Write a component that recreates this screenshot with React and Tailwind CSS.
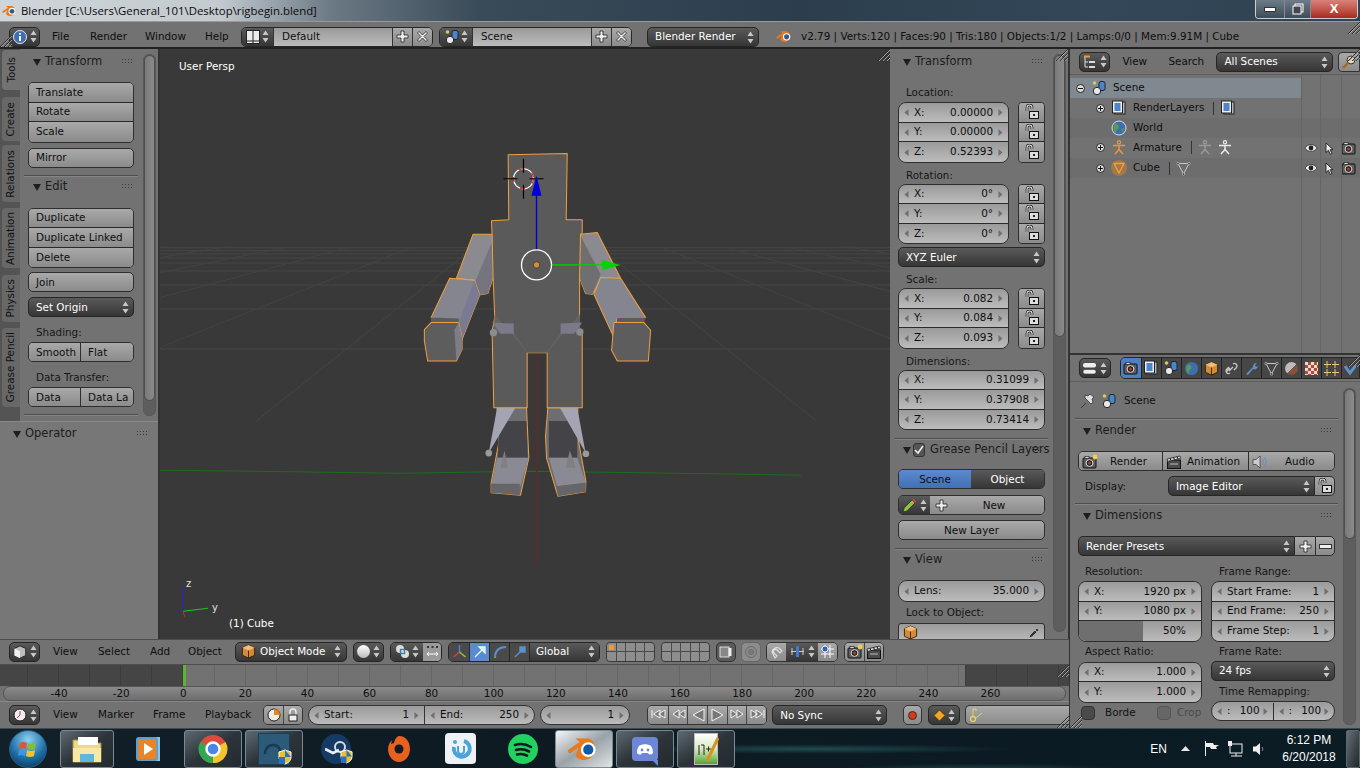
import React from "react";

// Small icon helpers -------------------------------------------------
const Updown = ({ dark = false }) => (
  <svg width="7" height="13" viewBox="0 0 7 13" className="shrink-0">
    <polygon points="3.5,0.5 6.5,5 0.5,5" fill={dark ? "#444" : "#c8c8c8"} />
    <polygon points="3.5,12.5 6.5,8 0.5,8" fill={dark ? "#444" : "#c8c8c8"} />
  </svg>
);

const Tri = ({ right = false }) => (
  <svg width="5" height="7" viewBox="0 0 5 7" className="shrink-0">
    <polygon points={right ? "0.5,0 4.5,3.5 0.5,7" : "4.5,0 0.5,3.5 4.5,7"} fill="#6f6f6f" />
  </svg>
);

const Arrow = () => (
  <svg width="8" height="8" viewBox="0 0 9 9" className="shrink-0">
    <polygon points="0,1 9,1 4.5,9" fill="#1e1e1e" />
  </svg>
);

const Dots = () => (
  <svg width="11" height="6" viewBox="0 0 11 6" className="shrink-0">
    {[0, 1].map((r) =>
      [0, 1, 2, 3].map((c) => <rect key={r + "-" + c} x={c * 3} y={r * 3} width="1" height="1" fill="#3a3a3a" />)
    )}
  </svg>
);

const Lock = () => (
  <svg width="16" height="16" viewBox="0 0 16 16">
    <path d="M3 7V3.5a2.5 2.5 0 0 1 5 0V5" fill="none" stroke="#111" strokeWidth="2.6" />
    <path d="M3 7V3.5a2.5 2.5 0 0 1 5 0V5" fill="none" stroke="#eee" strokeWidth="1.1" />
    <rect x="5.5" y="7.5" width="9" height="7" fill="#ddd" stroke="#111" />
    <rect x="9" y="10" width="2" height="2" fill="#222" />
  </svg>
);

const Plus = () => (
  <svg width="13" height="13" viewBox="0 0 13 13">
    <path d="M5 1h3v4h4v3H8v4H5V8H1V5h4z" fill="#eee" stroke="#222" strokeWidth="0.8" />
  </svg>
);

const Cross = () => (
  <svg width="13" height="13" viewBox="0 0 13 13">
    <path d="M3 1.5 6.5 5 10 1.5 11.5 3 8 6.5 11.5 10 10 11.5 6.5 8 3 11.5 1.5 10 5 6.5 1.5 3z" fill="#eee" stroke="#222" strokeWidth="0.8" />
  </svg>
);

const SceneIcon = () => (
  <svg width="16" height="16" viewBox="0 0 16 16">
    <circle cx="3.5" cy="3" r="1.8" fill="#d8c860" />
    <rect x="8" y="1.5" width="6" height="9" rx="2" fill="#4d86c8" stroke="#14263c" />
    <circle cx="6" cy="11" r="3.7" fill="#e8e8e8" stroke="#222" />
  </svg>
);

const BlenderLogo = ({ size = 16, eye = "#2b5c93", body = "#e8791d" }) => (
  <svg width={size} height={size} viewBox="0 0 24 24">
    <path d="M1 12.5 9 7 6 4.5h9.5a8 8 0 1 1-9.5 12.5L8 11l-5 3.4a1 1 0 0 1-2-1.9z" fill={body} />
    <circle cx="15" cy="12.5" r="5.2" fill="#fff" />
    <circle cx="15" cy="12.5" r="3.6" fill={eye} />
  </svg>
);

const CubeIcon = () => (
  <svg width="15" height="15" viewBox="0 0 16 16">
    <path d="M8 1 14.5 4v8L8 15 1.5 12V4z" fill="#d58a35" stroke="#3b2307" />
    <path d="M1.5 4 8 7l6.5-3L8 1z" fill="#f0bd78" />
    <path d="M8 7v8" stroke="#3b2307" />
  </svg>
);

const Camera = ({ star = false }) => (
  <svg width="16" height="16" viewBox="0 0 16 16">
    <rect x="1" y="4" width="13" height="10" rx="1" fill="#5e5e5e" stroke="#111" />
    <rect x="3" y="2.5" width="4" height="2" fill="#ddd" stroke="#111" strokeWidth="0.6" />
    <circle cx="7.5" cy="9" r="3.4" fill="#222" stroke="#ddd" />
    <circle cx="7.5" cy="9" r="1.5" fill="#b3402e" />
    {star && <circle cx="13" cy="3" r="2.4" fill="#f2cf4a" />}
  </svg>
);

const Clapper = () => (
  <svg width="16" height="16" viewBox="0 0 16 16">
    <rect x="1.5" y="6" width="13" height="8.5" fill="#4b4b4b" stroke="#111" />
    <path d="M1 5 14 2l.6 2.4L1.6 7.4z" fill="#ddd" stroke="#111" strokeWidth="0.7" />
    <path d="M4 4.2 5 6.6M7.5 3.4l1 2.4M11 2.6l1 2.4" stroke="#111" />
    <path d="M4 10h8" stroke="#bbb" />
  </svg>
);

const Eye = () => (
  <svg width="14" height="12" viewBox="0 0 14 12">
    <path d="M1 6c3-4.5 9-4.5 12 0-3 4.5-9 4.5-12 0z" fill="#ececec" stroke="#222" strokeWidth="0.7" />
    <circle cx="7" cy="6" r="2.4" fill="#222" />
  </svg>
);

const Pointer = () => (
  <svg width="9" height="13" viewBox="0 0 9 13">
    <path d="M1 1v9.5l2.4-2.2 2 4 1.6-.8-2-3.8H8z" fill="#eee" stroke="#111" strokeWidth="0.8" />
  </svg>
);

const Man = ({ color = "#e0e0e0", w = 14 }) => (
  <svg width={w} height="15" viewBox="0 0 14 15">
    <circle cx="7" cy="2.2" r="1.6" fill="none" stroke={color} strokeWidth="1.2" />
    <path d="M1 5.5h12M7 5v4.5M7 9.5 3 14M7 9.5l4 4.5" stroke={color} strokeWidth="1.5" fill="none" />
  </svg>
);

const MeshTri = () => (
  <svg width="15" height="15" viewBox="0 0 15 15">
    <path d="M2 2.5h11L7.5 13z" fill="none" stroke="#c8c8c8" />
    <circle cx="2" cy="2.5" r="1.2" fill="#333" stroke="#ddd" strokeWidth="0.6" />
    <circle cx="13" cy="2.5" r="1.2" fill="#333" stroke="#ddd" strokeWidth="0.6" />
    <circle cx="7.5" cy="13" r="1.2" fill="#333" stroke="#ddd" strokeWidth="0.6" />
  </svg>
);

const Expand = ({ minus = false }) => (
  <svg width="9" height="9" viewBox="0 0 9 9" className="shrink-0">
    <circle cx="4.5" cy="4.5" r="4" fill="#ddd" stroke="#222" />
    <path d={minus ? "M2 4.5h5" : "M2 4.5h5M4.5 2v5"} stroke="#111" />
  </svg>
);

const Corner = ({ className }) => (
  <svg width="12" height="12" viewBox="0 0 12 12" className={"absolute " + className}>
    <path d="M0 12 12 0M4 12l8-8M8 12l4-4" stroke="#2e2e2e" />
    <path d="M1 12 12 1M5 12l7-7M9 12l3-3" stroke="#a0a0a0" />
  </svg>
);

// Widgets ------------------------------------------------------------
const light = "bg-linear-to-b from-[#a9a9a9] to-[#8b8b8b] text-[#0e0e0e]";
const dark = "bg-linear-to-b from-[#5a5a5a] to-[#363636] text-white";
const num = "bg-linear-to-b from-[#9a9a9a] to-[#bcbcbc] text-[#0e0e0e]";

const Btn = ({ children, className = "" }) => (
  <div className={"flex items-center h-[20px] pt-[1px] border border-[#2e2e2e] rounded-[5px] px-[7px] " + light + " " + className}>{children}</div>
);

const Select = ({ children, className = "" }) => (
  <div className={"flex items-center justify-between h-[20px] pt-[1px] border border-[#262626] rounded-[5px] pl-[7px] pr-[4px] " + dark + " " + className}>
    <span className="truncate">{children}</span>
    <Updown />
  </div>
);

const Stack = ({ children, className = "" }) => (
  <div className={"flex flex-col border border-[#2e2e2e] overflow-hidden divide-y divide-[#2a2a2a] " + className}>{children}</div>
);

const NumRow = ({ label, value }) => (
  <div className={"flex items-center h-[19.5px] pt-[1px] px-[5px] whitespace-nowrap " + num}>
    <Tri />
    <span className="ml-[5px]">{label}</span>
    <span className="ml-auto mr-[5px]">{value}</span>
    <Tri right />
  </div>
);

const Locks = () => (
  <Stack className="w-[27px] rounded-[4px]">
    {[0, 1, 2].map((i) => (
      <div key={i} className={"flex items-center justify-center h-[19.5px] " + light}>
        <Lock />
      </div>
    ))}
  </Stack>
);

const Head = ({ title, className = "", tail = true }) => (
  <div className={"flex items-center h-[14px] pt-[1px] " + className}>
    <Arrow />
    <span className="ml-[4px] text-[11.5px] text-[#1c1c1c]">{title}</span>
    {tail && <span className="flex ml-auto"><Dots /></span>}
  </div>
);

const Label = ({ children, className = "" }) => <div className={"h-[14px] leading-[14px] whitespace-nowrap text-[#161616] " + className}>{children}</div>;

const Sep = ({ className = "" }) => <div className={"h-px bg-[#4d4d4d] border-b border-[#858585] box-content " + className} />;

const IconBtn = ({ children, className = "" }) => (
  <div className={"flex items-center justify-center gap-[3px] h-[20px] border border-[#262626] rounded-[5px] " + dark + " " + className}>{children}</div>
);

const Menu = ({ items, className = "" }) => (
  <div className={"flex items-center text-[#0e0e0e] " + className}>
    {items.map(([t, w]) => (
      <span key={t} className={w}>{t}</span>
    ))}
  </div>
);

const Scrollbar = ({ track, thumb, className = "" }) => (
  <div className={"w-[13px] rounded-[6px] bg-[#5e5e5e] border border-[#585858] " + track + " " + className}>
    <div className={"rounded-[6px] bg-linear-to-r from-[#7a7a7a] to-[#8a8a8a] border border-[#4e4e4e] " + thumb} />
  </div>
);

// Panels -------------------------------------------------------------
const ToolTab = ({ children, h, mt, active = false }) => (
  <div className={"flex items-center justify-center w-[18px] ml-[2px] rounded-l-[4px] " + h + " " + mt + " " + (active ? "bg-[#727272] w-[20px]" : "bg-[#686868]")}>
    <span className="[writing-mode:vertical-rl] rotate-180 text-[#111] whitespace-nowrap">{children}</span>
  </div>
);

const ToolShelf = () => (
  <div className="flex flex-col w-[160px] shrink-0 border-r-2 border-[#333]">
    <div className="flex h-[372px] shrink-0">
      <div className="flex flex-col w-[20px] shrink-0 bg-[#545454]">
        <ToolTab h="h-[40px]" mt="mt-[1px]" active>Tools</ToolTab>
        <ToolTab h="h-[44px]" mt="mt-[7px]">Create</ToolTab>
        <ToolTab h="h-[57px]" mt="mt-[4px]">Relations</ToolTab>
        <ToolTab h="h-[60px]" mt="mt-[6px]">Animation</ToolTab>
        <ToolTab h="h-[47px]" mt="mt-[7px]">Physics</ToolTab>
        <ToolTab h="h-[79px]" mt="mt-[6px]">Grease Pencil</ToolTab>
      </div>
      <div className="relative flex-1 bg-[#727272]">
        <div className="w-[106px] ml-[8px]">
          <Head title="Transform" className="mt-[5px] ml-[5px] w-[100px]" />
          <Stack className="mt-[14px] rounded-[5px]">
            {["Translate", "Rotate", "Scale"].map((t) => (
              <div key={t} className={"flex items-center h-[19.5px] pt-[1px] px-[7px] " + light}>{t}</div>
            ))}
          </Stack>
          <Btn className="mt-[5px]">Mirror</Btn>
          <Sep className="mt-[7px] -mx-[4px]" />
          <Head title="Edit" className="mt-[3px] ml-[5px] w-[100px]" />
          <Stack className="mt-[14px] rounded-[5px]">
            {["Duplicate", "Duplicate Linked", "Delete"].map((t) => (
              <div key={t} className={"flex items-center h-[19.5px] pt-[1px] px-[7px] whitespace-nowrap " + light}>{t}</div>
            ))}
          </Stack>
          <Btn className="mt-[4px]">Join</Btn>
          <Select className="mt-[5px]">Set Origin</Select>
          <Label className="mt-[8px] ml-[8px]">Shading:</Label>
          <div className="flex h-[20px] mt-[3px] border border-[#2e2e2e] rounded-[5px] overflow-hidden">
            <div className={"flex items-center w-[52px] pt-[1px] pl-[7px] border-r border-[#2e2e2e] " + light}>Smooth</div>
            <div className={"flex items-center flex-1 pt-[1px] pl-[7px] " + light}>Flat</div>
          </div>
          <Label className="mt-[8px] ml-[8px]">Data Transfer:</Label>
          <div className="flex h-[20px] mt-[3px] border border-[#2e2e2e] rounded-[5px] overflow-hidden">
            <div className={"flex items-center w-[52px] pt-[1px] pl-[7px] border-r border-[#2e2e2e] " + light}>Data</div>
            <div className={"flex items-center flex-1 pt-[1px] pl-[7px] whitespace-nowrap overflow-hidden " + light}>Data La</div>
          </div>
          <Sep className="mt-[7px] -mx-[4px]" />
        </div>
        <Scrollbar track="absolute left-[123px] top-[5px] h-[362px]" thumb="h-[346px]" />
      </div>
    </div>
    <div className="flex-1 bg-[#777] border-t border-[#8a8a8a]">
      <Head title="Operator" className="mt-[4px] ml-[13px] w-[135px]" />
    </div>
  </div>
);

// 3D model is a drawing: coordinates follow a 3x crop of the shot at (400,140)
const Model = () => {
  const out = "#f0a040";
  const grid = [247, 250, 253, 257, 262, 270, 284, 308, 348];
  return (
    <svg className="absolute inset-0 w-full h-full" viewBox="160 49 729 588">
      {grid.map((y) => (
        <line key={y} x1="160" x2="889" y1={y} y2={y} stroke="#474747" />
      ))}
      {[-6, -5, -4, -3, -2, -1, 1, 2, 3, 4, 5, 6].map((k) => (
        <line key={k} x1={536 + k * 62} y1="246" x2={536 + k * 280} y2="420" stroke="#434343" />
      ))}
      <path d="M160 469 400 472 536 470 800 474" stroke="#1f6b1f" fill="none" />
      <line x1="536" y1="352" x2="536" y2="562" stroke="#7c1f1f" />
      <g transform="translate(400 140) scale(0.3333)" strokeLinejoin="round">
        {/* left arm */}
        <path d="M218 280H276L278 410 262 458 235 462 222 418 168 412z" fill="#8a8a90" stroke={out} strokeWidth="3" />
        <path d="M276 300 278 410 262 458 235 462 225 420z" fill="#75757f" />
        <path d="M148 412 222 418 238 462 185 595 175 545 92 530z" fill="#85858f" stroke={out} strokeWidth="3" />
        <path d="M222 418 238 462 185 595 175 545z" fill="#7a7a92" />
        <path d="M92 530 175 533 175 545 92 545z" fill="#5c5c60" />
        <path d="M72 566 92 545H175L185 590 185 625 168 660H82L72 600z" fill="#5d5d5d" stroke={out} strokeWidth="3" />
        <path d="M162 566 175 545 185 590 185 625 168 660z" fill="#7d7d88" />
        {/* right arm */}
        <path d="M540 280 590 275 660 412 600 420 575 460 555 458 537 410z" fill="#8a8a90" stroke={out} strokeWidth="3" />
        <path d="M540 285 600 400 575 460 555 458 537 410z" fill="#6f6f72" />
        <path d="M600 410 660 412 735 530 650 530 640 590 580 460z" fill="#85858f" stroke={out} strokeWidth="3" />
        <path d="M650 530H735L730 545H650z" fill="#5c5c60" />
        <path d="M640 545H730L750 568 743 660H650L633 628z" fill="#5d5d5d" stroke={out} strokeWidth="3" />
        {/* legs, feet */}
        <path d="M290 800H378L385 950 360 1062 272 1055 272 1025 295 905z" fill="#6d6d72" stroke={out} strokeWidth="3" />
        <path d="M295 840H378L382 950H292z" fill="#444448" />
        <path d="M290 950H385L360 1035H272z" fill="#8a8a95" />
        <path d="M272 1028H358L358 1062 272 1055z" fill="#66666a" />
        <path d="M442 800H532L530 880 556 1020 555 1052 472 1065 438 950 435 885z" fill="#6d6d72" stroke={out} strokeWidth="3" />
        <path d="M445 840H530L530 950H445z" fill="#444448" />
        <path d="M445 950H530L556 1025 470 1035z" fill="#8a8a95" />
        <path d="M468 1035 556 1025V1052L472 1065z" fill="#66666a" />
        <path d="M345 800H290L265 935z" fill="#a4a4b2" />
        <path d="M478 800H530L555 935z" fill="#a4a4b2" />
        {/* body + head */}
        <path d="M273 240 325 237 323 42 500 38 497 237 545 237V277L540 280 537 410V520L530 560 545 570V800H440V635H380V800H280L275 570 283 530 278 410 275 280z" fill="#5a5a5a" stroke={out} strokeWidth="3" />
        <path d="M280 575H340L380 632H440L480 575 540 575 537 520 440 635H380L283 520z" fill="#636363" />
        <path d="M275 545 340 548V578H300z" fill="#7a7a88" />
        <path d="M545 545 480 548V578H520z" fill="#7a7a88" />
        {/* bones */}
        <circle cx="279" cy="575" r="11" fill="#8c8c8c" />
        <circle cx="538" cy="573" r="11" fill="#8c8c8c" />
        <circle cx="265" cy="936" r="10" fill="#9a9a9a" />
        <circle cx="556" cy="938" r="10" fill="#9a9a9a" />
        <path d="M312 928 300 980H322z" fill="#808080" />
        <path d="M508 928 495 980H525z" fill="#808080" />
      </g>
      {/* 3D cursor */}
      <circle cx="523" cy="178" r="10" fill="none" stroke="#fff" strokeWidth="1.2" />
      <circle cx="523" cy="178" r="10" fill="none" stroke="#d81e1e" strokeWidth="1.2" strokeDasharray="5 9" />
      <path d="M523 158v14M523 184v14M503 178h14M529 178h14" stroke="#000" strokeWidth="1.2" />
      {/* manipulator */}
      <line x1="536" y1="249" x2="536" y2="190" stroke="#0000d8" strokeWidth="1.4" />
      <polygon points="536,175 531,195 541,195" fill="#0000d8" />
      <line x1="551" y1="264" x2="605" y2="264" stroke="#00d400" strokeWidth="1.4" />
      <polygon points="620,264 601,259 602,269" fill="#00d400" />
      <circle cx="536" cy="264" r="15" fill="none" stroke="#fff" strokeWidth="1.3" />
      <circle cx="536" cy="264" r="3.2" fill="#d68a3f" stroke="#222" strokeWidth="0.6" />
      {/* axis widget */}
      <line x1="183" y1="610" x2="183" y2="584" stroke="#2222dd" />
      <line x1="183" y1="610" x2="208" y2="607" stroke="#22c222" />
      <line x1="183" y1="610" x2="185" y2="616" stroke="#d82222" />
      <text x="186" y="586" fill="#e0e0e0" fontSize="10">z</text>
      <text x="212" y="610" fill="#e0e0e0" fontSize="10">y</text>
    </svg>
  );
};

const Viewport = () => (
  <div className="relative flex-1 bg-[#393939] overflow-hidden">
    <Model />
    <div className="absolute left-[19px] top-[10px] text-white">User Persp</div>
    <div className="absolute left-[69px] top-[567px] text-white">(1) Cube</div>
    <Corner className="right-0 top-0" />
  </div>
);

const NPanel = () => {
  const rows = (a, b, c) => (
    <>
      <NumRow label="X:" value={a} />
      <NumRow label="Y:" value={b} />
      <NumRow label="Z:" value={c} />
    </>
  );
  return (
    <div className="relative w-[179px] shrink-0 bg-[#727272] overflow-hidden border-r border-[#333]">
      <div className="w-[147px] ml-[8px]">
        <Head title="Transform" className="mt-[5px] ml-[5px] w-[140px]" />
        <Label className="mt-[17px] ml-[8px]">Location:</Label>
        <div className="flex justify-between mt-[3px]">
          <Stack className="w-[111px] rounded-[8px]">{rows("0.00000", "0.00000", "0.52393")}</Stack>
          <Locks />
        </div>
        <Label className="mt-[5px] ml-[8px]">Rotation:</Label>
        <div className="flex justify-between mt-[2px]">
          <Stack className="w-[111px] rounded-[8px]">{rows("0°", "0°", "0°")}</Stack>
          <Locks />
        </div>
        <Select className="mt-[3px]">XYZ Euler</Select>
        <Label className="mt-[5px] ml-[8px]">Scale:</Label>
        <div className="flex justify-between mt-[2px]">
          <Stack className="w-[111px] rounded-[8px]">{rows("0.082", "0.084", "0.093")}</Stack>
          <Locks />
        </div>
        <Label className="mt-[5px] ml-[8px]">Dimensions:</Label>
        <Stack className="mt-[2px] rounded-[8px]">{rows("0.31099", "0.37908", "0.73414")}</Stack>
        <Sep className="mt-[8px] -mx-[3px]" />
        <div className="relative flex items-center mt-[2px] ml-[5px] h-[16px] whitespace-nowrap">
          <Arrow />
          <span className="flex items-center justify-center w-[14px] h-[14px] ml-[2px] rounded-[3px] border border-[#333] bg-[#555]">
            <svg width="10" height="10" viewBox="0 0 10 10"><path d="M1 5l3 3 5-7" fill="none" stroke="#eee" strokeWidth="1.6" /></svg>
          </span>
          <span className="ml-[5px] text-[11.5px] text-[#1c1c1c]">Grease Pencil Layers</span>
          <span className="absolute left-[129px] flex"><Dots /></span>
        </div>
        <div className="flex h-[20px] mt-[11px] border border-[#2e2e2e] rounded-[5px] overflow-hidden">
          <div className="flex items-center justify-center w-[72px] pt-[1px] bg-linear-to-b from-[#5b8ad0] to-[#4270b4] text-[#0e0e0e]">Scene</div>
          <div className={"flex items-center justify-center flex-1 pt-[1px] " + dark}>Object</div>
        </div>
        <div className="flex h-[20px] mt-[6px] border border-[#2e2e2e] rounded-[5px] overflow-hidden">
          <div className={"flex items-center justify-between w-[31px] px-[3px] " + dark}>
            <svg width="15" height="15" viewBox="0 0 15 15"><path d="M1 14l1-4 8-8 3 3-8 8z" fill="#8fbf3f" stroke="#222" strokeWidth="0.7" /><path d="M10 2l2-1 2 2-1 2z" fill="#d84040" /></svg>
            <Updown />
          </div>
          <div className={"relative flex items-center justify-center flex-1 pt-[1px] pl-[14px] " + light}>
            <span className="absolute left-[5px] flex"><Plus /></span>
            New
          </div>
        </div>
        <Btn className="mt-[5px] justify-center">New Layer</Btn>
        <Sep className="mt-[8px] -mx-[3px]" />
        <Head title="View" className="mt-[2px] ml-[5px] w-[140px]" />
        <div className="mt-[14px]">
          <Stack className="rounded-[9px]"><NumRow label="Lens:" value="35.000" /></Stack>
        </div>
        <Label className="mt-[3px] ml-[8px]">Lock to Object:</Label>
        <div className={"flex items-center justify-between h-[20px] mt-[4px] px-[4px] border border-[#2e2e2e] rounded-[3px] " + num}>
          <CubeIcon />
          <svg width="12" height="12" viewBox="0 0 12 12"><path d="M1 11l1-3 5-5 2 2-5 5zM7 3l2-2 2 2-2 2z" fill="#333" stroke="#ddd" strokeWidth="0.5" /></svg>
        </div>
      </div>
      <Scrollbar track="absolute left-[163px] top-[5px] h-[578px]" thumb="h-[282px]" />
      <Corner className="right-0 top-0" />
    </div>
  );
};

const LayerGrid = ({ className = "", w, dot = false }) => (
  <div className={"relative grid grid-cols-5 h-[20px] rounded-[4px] border border-[#3a3a3a] overflow-hidden gap-px bg-[#4a4a4a] " + w + " " + className}>
    {Array.from({ length: 10 }).map((_, i) => (
      <div key={i} className="bg-[#8d8d8d]" />
    ))}
    {dot && <span className="absolute left-[2px] top-[2px] w-[5px] h-[5px] rounded-[1px] bg-[#e89a3c]" />}
  </div>
);

const View3dHeader = () => (
  <div className="flex items-center h-[26px] shrink-0 bg-[#727272] border-y border-[#4d4d4d] pl-[9px] pb-[1px]">
    <IconBtn className="w-[31px]">
      <svg width="14" height="14" viewBox="0 0 16 16"><path d="M8 1 14.5 4v8L8 15 1.5 12V4z" fill="#bdbdbd" stroke="#222" /><path d="M1.5 4 8 7v8L1.5 12z" fill="#efefef" /></svg>
      <Updown />
    </IconBtn>
    <Menu className="ml-[13px]" items={[["View", "w-[45px]"], ["Select", "w-[52px]"], ["Add", "w-[38px]"], ["Object", "w-[47px]"]]} />
    <div className={"flex items-center w-[112px] h-[20px] border border-[#262626] rounded-[5px] px-[5px] " + dark}>
      <CubeIcon />
      <span className="ml-[4px]">Object Mode</span>
      <span className="flex ml-auto"><Updown /></span>
    </div>
    <IconBtn className="w-[31px] ml-[6px]">
      <span className="w-[13px] h-[13px] rounded-full bg-linear-to-b from-white to-[#bbb]" />
      <Updown />
    </IconBtn>
    <div className="flex h-[20px] ml-[6px] border border-[#262626] rounded-[5px] overflow-hidden">
      <div className={"flex items-center justify-center gap-[2px] w-[32px] " + dark}>
        <svg width="15" height="15" viewBox="0 0 15 15"><circle cx="5" cy="5" r="4" fill="#ddd" /><circle cx="10" cy="10" r="4" fill="#ddd" /><rect x="5.5" y="5.5" width="4" height="4" fill="none" stroke="#3b78d0" strokeWidth="1.4" /></svg>
        <Updown />
      </div>
      <div className="flex items-center justify-center w-[18px] bg-[#9a9a9a]">
        <svg width="15" height="15" viewBox="0 0 15 15"><path d="M2 10h11M2 10l2-2M2 10l2 2M13 10l-2-2M13 10l-2 2" stroke="#fff" /><path d="M2 3h2M6.5 3h2M11 3h2" stroke="#333" strokeWidth="2" /></svg>
      </div>
    </div>
    <div className="flex h-[20px] ml-[6px] border border-[#262626] rounded-[5px] overflow-hidden">
      <div className="flex items-center justify-center w-[20px] bg-[#4a4a4a]">
        <svg width="15" height="15" viewBox="0 0 15 15"><path d="M7.5 8V1" stroke="#4a7ed0" strokeWidth="1.5" /><path d="M7.5 8 1.5 13" stroke="#d84040" strokeWidth="1.5" /><path d="M7.5 8l6 5" stroke="#8fc83f" strokeWidth="1.5" /></svg>
      </div>
      <div className="flex items-center justify-center w-[20px] bg-[#5b8ad0] border-l border-[#262626]">
        <svg width="14" height="14" viewBox="0 0 14 14"><path d="M2 12 10 4M6 2h6v6z" stroke="#dff" fill="#cfe3ff" strokeWidth="1.3" /></svg>
      </div>
      <div className="flex items-center justify-center w-[20px] bg-[#4a4a4a] border-l border-[#262626]">
        <svg width="14" height="14" viewBox="0 0 14 14"><path d="M2 13C2 6 6 2 13 2" fill="none" stroke="#5f8fc8" strokeWidth="2" /></svg>
      </div>
      <div className="flex items-center justify-center w-[20px] bg-[#4a4a4a] border-l border-[#262626]">
        <svg width="14" height="14" viewBox="0 0 14 14"><path d="M2 12 8 6M7 2h5v5H7z" stroke="#5f8fc8" fill="#5f8fc8" strokeWidth="1.4" /></svg>
      </div>
      <div className={"flex items-center justify-between w-[70px] pl-[6px] pr-[4px] border-l border-[#262626] " + dark}>
        <span>Global</span>
        <Updown />
      </div>
    </div>
    <LayerGrid className="ml-[6px]" w="w-[49px]" dot />
    <LayerGrid className="ml-[6px]" w="w-[49px]" />
    <div className="flex items-center justify-center w-[20px] h-[20px] ml-[6px] rounded-[5px] border border-[#333] bg-[#5a5a5a]">
      <svg width="15" height="15" viewBox="0 0 15 15"><rect x="1" y="3" width="9" height="10" fill="#888" stroke="#ddd" /><path d="M11 4v8" stroke="#eee" strokeWidth="3" /></svg>
    </div>
    <div className="flex items-center justify-center w-[20px] h-[20px] ml-[5px] rounded-[5px] border border-[#666] bg-[#8c8c8c]">
      <svg width="14" height="14" viewBox="0 0 14 14"><circle cx="7" cy="7" r="5.5" fill="none" stroke="#6a6a6a" /><circle cx="7" cy="7" r="2.5" fill="#7c7c7c" stroke="#6a6a6a" /></svg>
    </div>
    <div className="flex h-[20px] ml-[5px] border border-[#333] rounded-[5px] overflow-hidden">
      <div className={"flex items-center justify-center w-[19px] " + light}>
        <svg width="14" height="14" viewBox="0 0 14 14"><path d="M2 7a5 5 0 0 1 7-4l3 3-2 2-3-3a2 2 0 0 0-3 3l3 3-2 2z" fill="none" stroke="#ddd" strokeWidth="1.2" /></svg>
      </div>
      <div className={"flex items-center justify-center gap-[3px] w-[32px] " + dark}>
        <svg width="15" height="13" viewBox="0 0 15 13"><path d="M1 6.5h13" stroke="#ccc" /><path d="M2 3v7M13 3v7" stroke="#ccc" /><rect x="6" y="1" width="3" height="11" fill="#3f7ad6" /></svg>
        <Updown />
      </div>
      <div className={"flex items-center justify-center w-[19px] " + light}>
        <svg width="15" height="15" viewBox="0 0 15 15"><path d="M1 10h13M1 5h13M5 1v13M10 1v13" stroke="#fff" /><circle cx="5" cy="5" r="3" fill="#2f62c0" stroke="#eee" /></svg>
      </div>
    </div>
    <div className="flex h-[20px] ml-[6px] border border-[#333] rounded-[5px] overflow-hidden">
      <div className={"flex items-center justify-center w-[19px] " + light}><Camera star /></div>
      <div className={"flex items-center justify-center w-[19px] border-l border-[#444] " + light}><Clapper /></div>
    </div>
  </div>
);

const Timeline = () => (
  <div className="relative h-[36px] shrink-0 bg-[#727272] overflow-hidden">
    <div className="flex h-[21px]">
      <div className="w-[183px] bg-[#454545] bg-[repeating-linear-gradient(270deg,#3c3c3c_0_1px,transparent_1px_31px)]" />
      <div className="w-[3px] bg-[#5bb52e]" />
      <div className="w-[779px] bg-[repeating-linear-gradient(90deg,transparent_0_28px,#666_28px_29px,transparent_29px_31px)]" />
      <div className="flex-1 bg-[#454545] bg-[repeating-linear-gradient(90deg,#3c3c3c_0_1px,transparent_1px_31px)]" />
    </div>
    <div className="flex items-center h-[15px] mx-[3px] rounded-[7px] bg-linear-to-b from-[#8a8a8a] to-[#6e6e6e] border border-[#555] pl-[24px] text-[#0e0e0e]">
      {[-40, -20, 0, 20, 40, 60, 80, 100, 120, 140, 160, 180, 200, 220, 240, 260].map((n) => (
        <span key={n} className="w-[62.1px] shrink-0 text-center">{n}</span>
      ))}
    </div>
    <Corner className="right-0 top-0" />
  </div>
);

const Transport = () => {
  const d = [
    "M2 2v8M10 2 3.5 6 10 10zM15 2 8.5 6 15 10z",
    "M9 2 3 6l6 4zM15 2 9 6l6 4z",
    "M14 1 3 7l11 6z",
    "M3 1l11 6-11 6z",
    "M2 2l6 4-6 4zM8 2l6 4-6 4z",
    "M15 2v8M2 2l6.5 4L2 10zM7 2l6.5 4L7 10z",
  ];
  return (
    <div className="flex h-[20px] ml-[17px] border border-[#333] rounded-[5px] overflow-hidden">
      {d.map((p, i) => (
        <div key={i} className={"flex items-center justify-center w-[19.7px] " + light + (i ? " border-l border-[#444]" : "")}>
          <svg width="16" height="14" viewBox="0 0 16 14"><path d={p} fill="#777" stroke="#f2f2f2" /></svg>
        </div>
      ))}
    </div>
  );
};

const TimelineHeader = () => (
  <div className="relative flex items-center h-[27px] shrink-0 bg-[#727272] border-t border-[#888] pl-[9px]">
    <IconBtn className="w-[31px]">
      <svg width="14" height="14" viewBox="0 0 14 14"><circle cx="7" cy="7" r="6" fill="#eee" stroke="#222" /><path d="M7 3v4l-3 3" stroke="#c33" fill="none" /></svg>
      <Updown />
    </IconBtn>
    <Menu className="ml-[13px]" items={[["View", "w-[45px]"], ["Marker", "w-[55px]"], ["Frame", "w-[52px]"], ["Playback", "w-[58px]"]]} />
    <div className="flex h-[20px] border border-[#333] rounded-[5px] overflow-hidden">
      <div className={"flex items-center justify-center w-[19px] " + light}>
        <svg width="14" height="14" viewBox="0 0 14 14"><circle cx="7" cy="7" r="6" fill="#eee" stroke="#222" /><path d="M7 7V1a6 6 0 0 1 6 6z" fill="#e8861c" /></svg>
      </div>
      <div className={"flex items-center justify-center w-[19px] border-l border-[#444] " + light}>
        <svg width="14" height="14" viewBox="0 0 14 14"><path d="M4 7V4a3 3 0 0 1 6 0v3" fill="none" stroke="#eee" strokeWidth="1.4" /><rect x="3" y="7" width="8" height="6" fill="#eee" stroke="#222" /></svg>
      </div>
    </div>
    <div className={"flex h-[20px] ml-[5px] border border-[#333] rounded-[10px] overflow-hidden " + num}>
      <div className="flex items-center w-[115px] px-[5px]"><Tri /><span className="ml-[5px]">Start:</span><span className="ml-auto mr-[5px]">1</span><Tri right /></div>
      <div className="flex items-center w-[110px] px-[5px] border-l border-[#333]"><Tri /><span className="ml-[5px]">End:</span><span className="ml-auto mr-[5px]">250</span><Tri right /></div>
    </div>
    <div className={"flex items-center w-[90px] h-[20px] ml-[5px] px-[5px] border border-[#333] rounded-[10px] " + num}>
      <Tri /><span className="ml-auto mr-[5px]">1</span><Tri right />
    </div>
    <Transport />
    <Select className="w-[115px] ml-[5px]">No Sync</Select>
    <div className={"flex items-center justify-center w-[19px] h-[20px] ml-[16px] border border-[#333] rounded-[5px] " + light}>
      <span className="w-[9px] h-[9px] rounded-full bg-[#d93a13] border border-[#333]" />
    </div>
    <IconBtn className="w-[32px] ml-[6px]">
      <svg width="11" height="11" viewBox="0 0 11 11"><path d="M5.5 0 11 5.5 5.5 11 0 5.5z" fill="#f2a521" stroke="#222" strokeWidth="0.6" /></svg>
      <Updown />
    </IconBtn>
    <div className={"flex items-center flex-1 h-[20px] ml-[5px] pl-[3px] border border-[#333] rounded-l-[5px] border-r-0 " + light}>
      <svg width="16" height="16" viewBox="0 0 16 16"><circle cx="4" cy="12" r="2.5" fill="none" stroke="#e2d36a" strokeWidth="1.3" /><path d="M4 9.5V2h3v2M6 12l7-6" stroke="#e2d36a" strokeWidth="1" fill="none" /></svg>
    </div>
    <Corner className="right-0 bottom-0" />
  </div>
);

const SceneStack = () => (
  <svg width="16" height="16" viewBox="0 0 16 16">
    <rect x="4" y="2" width="10" height="12" fill="#b8b8b8" stroke="#222" />
    <rect x="1.5" y="1" width="10" height="12" fill="#eee" stroke="#222" />
    <rect x="3.5" y="3" width="6" height="8" fill="#4d86c8" />
  </svg>
);

const OutRow = ({ children, bg = "", ml = "ml-[26px]", vis = false }) => (
  <div className={"relative flex items-center h-[20px] " + bg}>
    <div className={"flex items-center gap-[6px] text-[#0e0e0e] " + ml}>{children}</div>
    {vis && (
      <div className="absolute left-[234px] flex items-center gap-[7px]">
        <Eye /><Pointer /><Camera />
      </div>
    )}
  </div>
);

const Outliner = () => (
  <div className="relative h-[306px] shrink-0 bg-[#727272] border-b-2 border-[#333] overflow-hidden">
    <div className="flex items-center h-[26px] pl-[9px] border-b border-[#5e5e5e]">
      <IconBtn className="w-[32px]">
        <svg width="14" height="14" viewBox="0 0 14 14"><path d="M2 1v11h3M2 7h3" stroke="#ddd" fill="none" /><rect x="1" y="0.5" width="6" height="2" fill="#e6a03c" /><rect x="6" y="6" width="6" height="2" fill="#ddd" /><rect x="6" y="11" width="6" height="2" fill="#ddd" /></svg>
        <Updown />
      </IconBtn>
      <Menu className="ml-[12px]" items={[["View", "w-[46px]"], ["Search", "w-[48px]"]]} />
      <Select className="w-[119px]">All Scenes</Select>
      <div className={"flex items-center justify-center w-[22px] h-[20px] ml-[5px] border border-[#333] rounded-l-[4px] " + light}>
        <svg width="16" height="16" viewBox="0 0 16 16"><circle cx="10" cy="6" r="4" fill="#e8d8b8" stroke="#333" /><path d="M7 9l-5 5" stroke="#a8661c" strokeWidth="2.4" /></svg>
      </div>
    </div>
    <div className="relative pt-[3px]">
      <OutRow bg="bg-[#808890] w-[231px]" ml="ml-[6px]">
        <Expand minus /><SceneIcon /><span>Scene</span>
      </OutRow>
      <OutRow>
        <Expand /><SceneStack /><span>RenderLayers</span>
        <span className="w-px h-[13px] bg-[#333] ml-[3px]" /><SceneStack />
      </OutRow>
      <OutRow bg="bg-[#6d6d6d]" ml="ml-[41px]">
        <svg width="16" height="16" viewBox="0 0 16 16"><circle cx="8" cy="8" r="7" fill="#3c6fb0" stroke="#ddd" /><path d="M4 4c3 0 5 2 3 5-2 1-3 3-1 5-3-1-5-6-2-10zM10 9l3-1-1 4z" fill="#5e9b4a" /></svg>
        <span>World</span>
      </OutRow>
      <OutRow vis>
        <Expand /><Man color="#e8993e" w={16} /><span>Armature</span>
        <span className="w-px h-[13px] bg-[#333] ml-[3px]" /><Man color="#9a9a9a" /><Man color="#ececec" />
      </OutRow>
      <OutRow bg="bg-[#6d6d6d]" vis>
        <Expand />
        <span className="flex items-center justify-center w-[16px] h-[16px] rounded-full bg-[#a3784a]">
          <svg width="12" height="12" viewBox="0 0 12 12"><path d="M1 1.5h10L6 11z" fill="none" stroke="#f0a040" strokeWidth="1.4" /></svg>
        </span>
        <span>Cube</span>
        <span className="w-px h-[13px] bg-[#333] ml-[3px]" /><MeshTri />
      </OutRow>
      <div className="absolute left-[231px] top-0 w-[20px] h-[300px] border-x border-[#666]" />
      <div className="absolute left-[271px] top-0 h-[300px] w-px bg-[#666]" />
    </div>
    <Corner className="right-0 top-0" />
  </div>
);

const PropTab = ({ children, active = false, first = false }) => (
  <div className={"flex items-center justify-center w-[20px] h-[20px] shrink-0 " + (first ? "" : "border-l border-[#222] ") + (active ? "bg-[#4e7fc4]" : "bg-[#464646]")}>
    {children}
  </div>
);

const Properties = () => (
  <div className="relative flex-1 bg-[#727272] overflow-hidden">
    <div className="flex items-center h-[27px] pl-[9px] border-b border-[#5e5e5e]">
      <IconBtn className="w-[32px]">
        <svg width="15" height="13" viewBox="0 0 15 13"><rect x="1" y="1" width="13" height="4.5" rx="2" fill="#eee" /><rect x="1" y="7.5" width="13" height="4.5" rx="2" fill="#eee" stroke="#222" strokeWidth="0.5" /></svg>
        <Updown />
      </IconBtn>
      <div className="flex ml-[9px] border border-[#262626] rounded-l-[5px] overflow-hidden">
        <PropTab active first><Camera /></PropTab>
        <PropTab><SceneStack /></PropTab>
        <PropTab><SceneIcon /></PropTab>
        <PropTab><svg width="15" height="15" viewBox="0 0 16 16"><circle cx="8" cy="8" r="7" fill="#3c6fb0" /><path d="M4 4c3 0 5 2 3 5-2 1-3 3-1 5-3-1-5-6-2-10z" fill="#5e9b4a" /></svg></PropTab>
        <PropTab><CubeIcon /></PropTab>
        <PropTab><svg width="15" height="15" viewBox="0 0 15 15"><path d="M2 11l4-4M6 12a2.5 2.5 0 0 1-3.5-3.5L5 6M9 3a2.5 2.5 0 0 1 3.5 3.5L10 9M9 6l-4 4" stroke="#c8c8c8" strokeWidth="1.3" fill="none" /></svg></PropTab>
        <PropTab><svg width="15" height="15" viewBox="0 0 15 15"><path d="M2 13l7-7a3.5 3.5 0 0 1 4-4l-2 2 1 2 2-1a3.5 3.5 0 0 1-5 3l-5 6z" fill="#5f90c8" /></svg></PropTab>
        <PropTab><MeshTri /></PropTab>
        <PropTab><span className="w-[13px] h-[13px] rounded-full bg-[linear-gradient(135deg,#bbb_50%,#8a4e3c_50%)]" /></PropTab>
        <PropTab><span className="w-[13px] h-[13px] bg-[repeating-conic-gradient(#b04a3c_0_25%,#e8d8d0_0_50%)] bg-[length:6px_6px]" /></PropTab>
        <PropTab><svg width="15" height="15" viewBox="0 0 15 15"><path d="M3 0v7M0 3.5h7M11 0v7M8 3.5h7M3 8v7M0 11.5h7M11 8v7M8 11.5h7" stroke="#e8c86a" /></svg></PropTab>
        <PropTab><svg width="15" height="15" viewBox="0 0 15 15"><path d="M1 5l5 7 6-8" stroke="#5f90c8" strokeWidth="3" fill="none" /></svg></PropTab>
      </div>
    </div>
    <div className="w-[257px] ml-[8px]">
      <div className="flex items-center h-[16px] mt-[11px] ml-[2px] gap-[5px]">
        <svg width="16" height="16" viewBox="0 0 16 16"><path d="M1 15l5-5M5 5l6 6 2-2-1-3 2-2-4-3-2 2-3-1z" fill="#ddd" stroke="#222" strokeWidth="0.7" /></svg>
        <SceneIcon />
        <span className="ml-[2px] text-[#111]">Scene</span>
      </div>
      <Sep className="mt-[9px] -mx-[3px]" />
      <Head title="Render" className="mt-[3px] ml-[5px] w-[249px]" />
      <div className="flex h-[20px] mt-[14px] border border-[#2e2e2e] rounded-[5px] overflow-hidden">
        <div className={"flex items-center w-[84px] pt-[1px] pl-[3px] border-r border-[#2e2e2e] " + light}><Camera star /><span className="ml-[12px]">Render</span></div>
        <div className={"flex items-center w-[86px] pt-[1px] pl-[3px] border-r border-[#2e2e2e] " + light}><Clapper /><span className="ml-[5px]">Animation</span></div>
        <div className={"flex items-center flex-1 pt-[1px] pl-[3px] " + light}>
          <svg width="16" height="14" viewBox="0 0 16 14"><path d="M1 4.5h3L8 1v12L4 9.5H1z" fill="#ccc" stroke="#333" strokeWidth="0.7" /><path d="M10 4a4 4 0 0 1 0 6M12 2a7 7 0 0 1 0 10" stroke="#5f90c8" fill="none" /></svg>
          <span className="ml-[17px]">Audio</span>
        </div>
      </div>
      <div className="flex items-center h-[20px] mt-[5px]">
        <span className="ml-[7px] w-[83px] pt-[1px] text-[#111]">Display:</span>
        <div className={"flex items-center justify-between w-[147px] h-[20px] pt-[1px] pl-[7px] pr-[4px] border border-[#262626] rounded-l-[5px] " + dark}>
          <span>Image Editor</span><Updown />
        </div>
        <div className={"flex items-center justify-center flex-1 h-[20px] border border-l-0 border-[#2e2e2e] rounded-r-[5px] " + light}><Lock /></div>
      </div>
      <Sep className="mt-[7px] -mx-[3px]" />
      <Head title="Dimensions" className="mt-[3px] ml-[5px] w-[249px]" />
      <div className="flex h-[20px] mt-[14px]">
        <div className={"flex items-center justify-between w-[217px] pt-[1px] pl-[7px] pr-[4px] border border-[#262626] rounded-l-[5px] " + dark}>
          <span>Render Presets</span><Updown />
        </div>
        <div className={"flex items-center justify-center w-[20px] border-y border-[#2e2e2e] " + light}><Plus /></div>
        <div className={"flex items-center justify-center flex-1 border border-[#2e2e2e] rounded-r-[5px] " + light}><span className="w-[11px] h-[3px] bg-[#eee] border border-[#333] box-content" /></div>
      </div>
      <div className="grid grid-cols-2 gap-x-[9px] mt-[8px]">
        <div>
          <Label className="ml-[7px]">Resolution:</Label>
          <Stack className="mt-[3px] rounded-[8px]">
            <NumRow label="X:" value="1920 px" />
            <NumRow label="Y:" value="1080 px" />
            <div className={"relative flex items-center justify-end h-[19.5px] pt-[1px] pr-[15px] " + num}>
              <span className="absolute left-0 top-0 bottom-0 w-[64px] bg-[#6f6f6f]" />
              <span className="relative">50%</span>
            </div>
          </Stack>
          <Label className="mt-[2px] ml-[7px]">Aspect Ratio:</Label>
          <Stack className="mt-[4px] rounded-[8px]">
            <NumRow label="X:" value="1.000" />
            <NumRow label="Y:" value="1.000" />
          </Stack>
          <div className="flex items-center h-[14px] mt-[3px] ml-[3px]">
            <span className="w-[14px] h-[14px] rounded-[4px] bg-[#4a4a4a] border border-[#333]" />
            <span className="ml-[10px] w-[44px] text-[#111]">Borde</span>
            <span className="w-[14px] h-[14px] ml-[8px] rounded-[4px] bg-[#666] border border-[#555]" />
            <span className="ml-[6px] text-[#4a4a4a]">Crop</span>
          </div>
        </div>
        <div>
          <Label className="ml-[8px]">Frame Range:</Label>
          <Stack className="mt-[3px] rounded-[8px]">
            <NumRow label="Start Frame:" value="1" />
            <NumRow label="End Frame:" value="250" />
            <NumRow label="Frame Step:" value="1" />
          </Stack>
          <Label className="mt-[2px] ml-[8px]">Frame Rate:</Label>
          <Select className="mt-[3px]">24 fps</Select>
          <Label className="mt-[3px] ml-[8px]">Time Remapping:</Label>
          <div className={"flex h-[20px] mt-[3px] pt-[1px] border border-[#2e2e2e] rounded-[10px] overflow-hidden " + num}>
            <div className="flex items-center flex-1 px-[5px] border-r border-[#2e2e2e]"><Tri /><span className="ml-[5px]">:</span><span className="ml-auto mr-[3px]">100</span><Tri right /></div>
            <div className="flex items-center flex-1 px-[5px]"><Tri /><span className="ml-[5px]">:</span><span className="ml-auto mr-[3px]">100</span><Tri right /></div>
          </div>
        </div>
      </div>
    </div>
    <Scrollbar track="absolute right-[4px] top-[33px] h-[337px]" thumb="h-[150px]" />
    <Corner className="right-0 top-0" />
    <Corner className="left-0 bottom-0" />
  </div>
);

// Taskbar ------------------------------------------------------------
const Tile = ({ children, on = false, w = "w-[58px]", bright = false }) => (
  <div className={"relative flex items-center justify-center h-[38px] shrink-0 " + w + " " + (on ? "rounded-[3px] border border-[#7a8a94] " + (bright ? "bg-linear-to-br from-[#f3f6f7] via-[#9aa3a8] to-[#e0e4e6]" : "bg-linear-to-br from-[#5f6a70] via-[#2c343a] to-[#232a30]") : "")}>
    {children}
  </div>
);

const Taskbar = () => (
  <div className="flex items-center justify-between h-[40px] shrink-0 border-t border-[#3c4a52] bg-[radial-gradient(ellipse_at_810px_20px,#1f4b50_0,transparent_200px),radial-gradient(ellipse_at_980px_40px,#1c4448_0,transparent_140px),linear-gradient(90deg,#122029,#0d1a22_40%,#0b1c24)]">
    <div className="flex items-center gap-[3px] pl-[9px]">
      <div className="flex items-center justify-center w-[38px] h-[38px] mr-[10px] rounded-full bg-[radial-gradient(circle_at_50%_25%,#8fd0f0,#1d6fa8_55%,#0a2d4a)] border border-[#2a5e80]">
        <svg width="20" height="20" viewBox="0 0 20 20">
          <path d="M2 4c3-1.5 5-1 7 0l-1 6c-2-1-4-1.5-7 0z" fill="#e8542a" />
          <path d="M10 4c2 1 4 1.5 8 0l-1 6c-3 1.5-5 1-7 0z" fill="#7fbf3a" />
          <path d="M1 11c3-1.5 5-1 7 0l-1 6c-2-1-4-1.5-7 0z" fill="#3a9bdc" />
          <path d="M9 11c2 1 4 1.5 8 0l-1 6c-3 1.5-5 1-8 0z" fill="#f2c22e" />
        </svg>
      </div>
      <Tile on w="w-[54px]">
        <svg width="34" height="30" viewBox="0 0 34 30">
          <path d="M3 6h11l2 3h15v19H3z" fill="#f0d88a" stroke="#a88a3c" />
          <rect x="8" y="3" width="20" height="8" fill="#fff" />
          <path d="M3 14h28v14H3z" fill="#f8e8a8" />
          <path d="M10 28v-8h14v8" fill="#5fb4e0" />
        </svg>
      </Tile>
      <Tile w="w-[64px]">
        <svg width="26" height="28" viewBox="0 0 26 28">
          <rect x="6" y="2" width="18" height="24" fill="#8cc4e8" />
          <rect x="1" y="3" width="20" height="22" rx="2" fill="#e8842a" stroke="#5ba0d0" strokeWidth="2" />
          <polygon points="8,8 17,14 8,20" fill="#fff" />
        </svg>
      </Tile>
      <Tile on>
        <svg width="30" height="30" viewBox="0 0 30 30">
          <circle cx="15" cy="15" r="14" fill="#dd4b3e" />
          <path d="M15 15 27.5 8A14 14 0 0 1 15 29z" fill="#f4c430" />
          <path d="M15 15 15 29A14 14 0 0 1 2.5 8z" fill="#33a853" />
          <circle cx="15" cy="15" r="6.5" fill="#4a86e8" stroke="#fff" strokeWidth="2.4" />
        </svg>
      </Tile>
      <Tile on>
        <div className="relative w-[32px] h-[32px] bg-[#2d5a78] border border-[#17405c] flex items-center justify-center">
          <svg width="22" height="18" viewBox="0 0 22 18"><path d="M2 14c0-5 3-9 8-9s8 4 8 9" fill="none" stroke="#163a52" strokeWidth="2.4" /></svg>
          <svg className="absolute right-[-3px] bottom-[-1px]" width="14" height="16" viewBox="0 0 14 16"><path d="M7 1l6 2v5c0 4-3 6-6 7-3-1-6-3-6-7V3z" fill="#e8c22e" stroke="#fff" /><path d="M7 1v14H1V8h12" fill="#2f6fc0" /></svg>
        </div>
      </Tile>
      <Tile w="w-[60px]">
        <div className="relative flex items-center justify-center w-[30px] h-[30px] rounded-full bg-[#153a66]">
          <svg width="22" height="16" viewBox="0 0 22 16"><circle cx="15" cy="6" r="5" fill="none" stroke="#ddd" strokeWidth="2" /><path d="M0 8l8 4 6-3" stroke="#eee" strokeWidth="2.6" fill="none" /></svg>
          <svg className="absolute right-[-2px] bottom-0" width="13" height="15" viewBox="0 0 14 16"><path d="M7 1l6 2v5c0 4-3 6-6 7-3-1-6-3-6-7V3z" fill="#e8c22e" stroke="#fff" /><path d="M7 1v14H1V8h12" fill="#2f6fc0" /></svg>
        </div>
      </Tile>
      <Tile w="w-[59px]">
        <svg width="24" height="28" viewBox="0 0 24 28"><path d="M12 1c7 0 11 6 11 13s-5 13-11 13S1 21 1 14c0-4 2-7 4-9l-1 4 3-1c1-4 3-7 5-7z" fill="#e8601e" /><circle cx="12" cy="14" r="4.5" fill="#101c24" /></svg>
      </Tile>
      <Tile w="w-[59px]">
        <div className="flex items-center justify-center w-[31px] h-[31px] rounded-[4px] bg-[#eef2f4]">
          <svg width="24" height="24" viewBox="0 0 24 24"><path d="M5 10a8 8 0 1 0 10-6" fill="none" stroke="#4aa4dc" strokeWidth="4" /><circle cx="6" cy="5" r="2" fill="#4aa4dc" /><path d="M9 9v5a3 3 0 0 0 6 0V9" fill="none" stroke="#4aa4dc" strokeWidth="2" /></svg>
        </div>
      </Tile>
      <Tile w="w-[59px]">
        <svg width="30" height="30" viewBox="0 0 30 30"><circle cx="15" cy="15" r="15" fill="#23d160" /><path d="M7 11c6-2 11-1 16 2M8 16c5-1.5 9-.8 13 1.5M9 20.5c4-1 7-.5 10 1.2" fill="none" stroke="#0e1a20" strokeWidth="2.6" strokeLinecap="round" /></svg>
      </Tile>
      <Tile on bright>
        <BlenderLogo size={34} eye="#0e5aa5" />
      </Tile>
      <Tile on>
        <div className="relative flex items-center justify-center w-[26px] h-[24px] rounded-[4px] bg-[#6d87d6]">
          <svg width="18" height="12" viewBox="0 0 18 12"><path d="M1 10c0-5 2-8 4-8 2-1 6-1 8 0 2 0 4 3 4 8-2 2-4 2-5 0H6c-1 2-3 2-5 0z" fill="#fff" /><circle cx="6" cy="7" r="1.4" fill="#6d87d6" /><circle cx="12" cy="7" r="1.4" fill="#6d87d6" /></svg>
          <span className="absolute right-[0px] bottom-[-5px] w-0 h-0 border-t-[6px] border-l-[6px] border-t-[#6d87d6] border-l-transparent" />
        </div>
      </Tile>
      <Tile on>
        <div className="relative flex flex-col justify-end w-[24px] h-[32px] bg-linear-to-b from-white via-[#d8e8c0] to-[#4da62c] border border-[#bbb]">
          <svg className="absolute inset-0" width="24" height="32" viewBox="0 0 24 32"><path d="M4 11v10M6 11h3v10M11 15h5M13.5 12.5v5" stroke="#222" fill="none" /><path d="M23 4 12 27" stroke="#d8921c" strokeWidth="3" /></svg>
        </div>
      </Tile>
    </div>
    <div className="flex items-center text-white">
      <span className="text-[12px] font-['Liberation_Sans',sans-serif] mr-[14px]">EN</span>
      <svg width="9" height="5" viewBox="0 0 9 5" className="mr-[14px]"><polygon points="4.5,0 9,5 0,5" fill="#e8e8e8" /></svg>
      <svg width="15" height="15" viewBox="0 0 15 15" className="mr-[8px]"><path d="M1.5 0v15" stroke="#eee" /><path d="M2 2h7l1 2h5l-3 2 1 2H7L6 6H2z" fill="#eee" /></svg>
      <svg width="16" height="16" viewBox="0 0 16 16" className="mr-[9px]"><rect x="3" y="3" width="12" height="9" fill="none" stroke="#eee" /><path d="M4 15h11M9 12v3" stroke="#eee" /><rect x="1" y="0" width="4" height="5" fill="#eee" /></svg>
      <svg width="12" height="14" viewBox="0 0 12 14" className="mr-[18px]"><path d="M1 4.5h3L8 1v12L4 9.5H1z" fill="#eee" /><path d="M10 5a3 3 0 0 1 0 4" stroke="#888" fill="none" /></svg>
      <div className="flex flex-col items-center w-[54px] text-[12px] leading-[17px] font-['Liberation_Sans',sans-serif] mr-[10px]">
        <span>6:12 PM</span>
        <span>6/20/2018</span>
      </div>
      <div className="w-[14px] h-[38px] rounded-[2px] border border-[#5c666c] bg-linear-to-br from-[#667076] to-[#20282e]" />
    </div>
  </div>
);

const TitleBar = () => (
  <div className="relative flex items-center h-[21px] shrink-0 pl-[2px] bg-[linear-gradient(90deg,#cfd5d9_0,#c3cad0_220px,#6c7a85_330px,#394a58_480px,#2c3e4e_800px,#334758_1100px,#2f4252)]">
    <BlenderLogo size={16} />
    <span className="ml-[3px] text-[11.4px] text-[#0a0a0a] font-['Open_Sans',sans-serif] whitespace-nowrap">Blender [C:\Users\General_101\Desktop\rigbegin.blend]</span>
    <div className="absolute right-[2px] top-0 flex h-[19px] border border-t-0 border-[#c8d0d4] rounded-b-[4px] overflow-hidden">
      <div className="flex items-center justify-center w-[28px] bg-linear-to-b from-[#6d7c88] to-[#3e4c58]"><span className="w-[10px] h-[3px] bg-white border border-[#333] box-content" /></div>
      <div className="flex items-center justify-center w-[26px] bg-linear-to-b from-[#6d7c88] to-[#3e4c58] border-l border-[#889]"><svg width="12" height="12" viewBox="0 0 12 12"><rect x="3" y="1" width="8" height="8" fill="none" stroke="#fff" /><rect x="1" y="3" width="8" height="8" fill="#445" stroke="#fff" /></svg></div>
      <div className="flex items-center justify-center w-[47px] bg-linear-to-b from-[#d9827a] to-[#a8281e] border-l border-[#889]"><span className="text-white text-[13px] font-bold font-['Liberation_Sans',sans-serif]">X</span></div>
    </div>
  </div>
);

const InfoHeader = () => (
  <div className="relative flex items-center h-[28px] shrink-0 bg-[#727272] border-t border-[#9a9a9a] border-b-2 border-b-[#222] pl-[9px] pt-[4px]">
    <IconBtn className="w-[31px]">
      <svg width="14" height="14" viewBox="0 0 14 14"><circle cx="7" cy="7" r="6.5" fill="#3f6fb0" stroke="#dfe8f4" /><path d="M7 3v1.5M7 6v5" stroke="#fff" strokeWidth="2" /></svg>
      <Updown />
    </IconBtn>
    <Menu className="ml-[12px]" items={[["File", "w-[38px]"], ["Render", "w-[55px]"], ["Window", "w-[60px]"], ["Help", "w-[36px]"]]} />
    <div className="flex h-[20px] border border-[#262626] rounded-[5px] overflow-hidden">
      <div className={"flex items-center justify-center gap-[2px] w-[31px] " + dark}>
        <svg width="14" height="14" viewBox="0 0 14 14"><rect x="0.5" y="0.5" width="13" height="13" fill="#ececec" stroke="#222" /><path d="M7 0v14M0 11h14" stroke="#222" /></svg>
        <Updown />
      </div>
      <div className={"flex items-center w-[119px] pl-[8px] border-l border-[#333] " + num}>Default</div>
      <div className={"flex items-center justify-center w-[20px] border-l border-[#333] " + light}><Plus /></div>
      <div className={"flex items-center justify-center w-[20px] border-l border-[#333] " + light}><Cross /></div>
    </div>
    <div className="flex h-[20px] ml-[6px] border border-[#262626] rounded-[5px] overflow-hidden">
      <div className={"flex items-center justify-center gap-[1px] w-[32px] " + dark}><SceneIcon /><Updown /></div>
      <div className={"flex items-center w-[119px] pl-[8px] border-l border-[#333] " + num}>Scene</div>
      <div className={"flex items-center justify-center w-[20px] border-l border-[#333] " + light}><Plus /></div>
      <div className={"flex items-center justify-center w-[20px] border-l border-[#333] " + light}><Cross /></div>
    </div>
    <Select className="w-[112px] ml-[15px]">Blender Render</Select>
    <span className="ml-[17px] flex"><BlenderLogo size={17} /></span>
    <span className="ml-[8px] whitespace-nowrap text-[#0e0e0e]">v2.79 | Verts:120 | Faces:90 | Tris:180 | Objects:1/2 | Lamps:0/0 | Mem:9.91M | Cube</span>
    <Corner className="left-0 bottom-0" />
    <Corner className="right-0 top-0" />
  </div>
);

export default function App() {
  return (
    <div className="flex flex-col w-[1360px] h-[768px] overflow-hidden text-[10.4px] font-['DejaVu_Sans',sans-serif] bg-[#333]">
      <TitleBar />
      <InfoHeader />
      <div className="flex flex-1 min-h-0">
        <div className="flex flex-col w-[1069px] shrink-0">
          <div className="flex flex-1 min-h-0">
            <ToolShelf />
            <Viewport />
            <NPanel />
          </div>
          <View3dHeader />
          <Timeline />
          <TimelineHeader />
        </div>
        <div className="flex flex-col flex-1 min-w-0 border-l border-[#333]">
          <Outliner />
          <Properties />
        </div>
      </div>
      <Taskbar />
    </div>
  );
}
